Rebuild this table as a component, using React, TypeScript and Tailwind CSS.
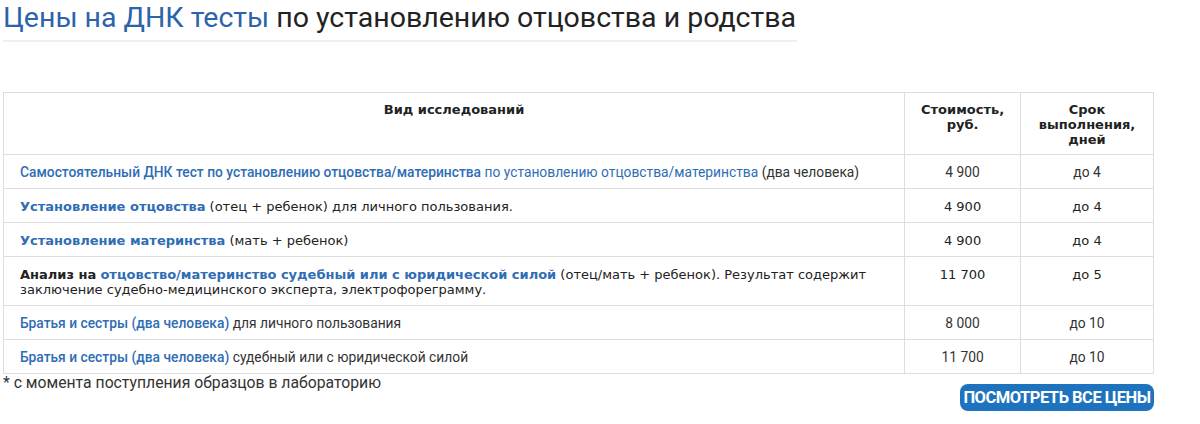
import React from "react";

const roboto = { fontFamily: "Roboto, 'Liberation Sans', sans-serif" };

export default function App() {
  const linkCls = "text-[#2f6db5]";
  const rCell = "font-['Roboto',sans-serif] text-[13.8px] leading-[16px] text-[#333]";
  const vCell = "font-['Verdana','DejaVu_Sans',sans-serif] text-[13px] leading-[15px] text-[#222]";
  const td = "border border-[#dddddd] align-top";
  return (
    <div className="w-[1200px] h-[424px] bg-white pl-[3px] overflow-hidden">
      <div className="pt-[1px]">
        <h1 className="inline-block font-['Roboto',sans-serif] text-[28.5px] leading-[34px] font-normal border-b-2 border-[#eeeeee] pb-[5px] pr-[1px]">
          <span className="text-[#2c63ab]">Цены на ДНК тесты</span>{" "}
          <span className="text-[#222]">по установлению отцовства и родства</span>
        </h1>
      </div>
      <table className="mt-[50px] w-[1151px] border-collapse border border-[#dddddd]">
        <colgroup>
          <col className="w-[902px]" />
          <col className="w-[116px]" />
          <col className="w-[133px]" />
        </colgroup>
        <thead>
          <tr className="font-['Verdana','DejaVu_Sans',sans-serif] text-[13px] leading-[15px] font-bold text-[#222]">
            <th className={`${td} h-[62px] pt-[9px] text-center`}>Вид исследований</th>
            <th className={`${td} pt-[9px] text-center`}>Стоимость,<br />руб.</th>
            <th className={`${td} pt-[9px] text-center`}>Срок<br />выполнения,<br />дней</th>
          </tr>
        </thead>
        <tbody>
          <tr className={rCell}>
            <td className={`${td} h-[34px] pt-[9px] px-[16px]`}>
              <span className={`${linkCls} font-medium`}>Самостоятельный ДНК тест по установлению отцовства/материнства</span>{" "}
              <span className={linkCls}>по установлению отцовства/материнства</span> (два человека)
            </td>
            <td className={`${td} pt-[9px] text-center`}>4 900</td>
            <td className={`${td} pt-[9px] text-center`}>до 4</td>
          </tr>
          <tr className={vCell}>
            <td className={`${td} h-[34px] pt-[10px] px-[16px]`}>
              <span className={`${linkCls} font-bold`}>Установление отцовства</span> (отец + ребенок) для личного пользования.
            </td>
            <td className={`${td} pt-[10px] text-center`}>4 900</td>
            <td className={`${td} pt-[10px] text-center`}>до 4</td>
          </tr>
          <tr className={vCell}>
            <td className={`${td} h-[34px] pt-[10px] px-[16px]`}>
              <span className={`${linkCls} font-bold`}>Установление материнства</span> (мать + ребенок)
            </td>
            <td className={`${td} pt-[10px] text-center`}>4 900</td>
            <td className={`${td} pt-[10px] text-center`}>до 4</td>
          </tr>
          <tr className={vCell}>
            <td className={`${td} h-[49px] pt-[10px] px-[16px]`}>
              <span className="font-bold">Анализ на</span>{" "}
              <span className={`${linkCls} font-bold`}>отцовство/материнство судебный или с юридической силой</span> (отец/мать + ребенок). Результат содержит заключение судебно-медицинского эксперта, электрофореграмму.
            </td>
            <td className={`${td} pt-[10px] text-center`}>11 700</td>
            <td className={`${td} pt-[10px] text-center`}>до 5</td>
          </tr>
          <tr className={rCell}>
            <td className={`${td} h-[34px] pt-[9px] px-[16px]`}>
              <span className={`${linkCls} font-medium`}>Братья и сестры (два человека)</span> для личного пользования
            </td>
            <td className={`${td} pt-[9px] text-center`}>8 000</td>
            <td className={`${td} pt-[9px] text-center`}>до 10</td>
          </tr>
          <tr className={rCell}>
            <td className={`${td} h-[34px] pt-[9px] px-[16px]`}>
              <span className={`${linkCls} font-medium`}>Братья и сестры (два человека)</span> судебный или с юридической силой
            </td>
            <td className={`${td} pt-[9px] text-center`}>11 700</td>
            <td className={`${td} pt-[9px] text-center`}>до 10</td>
          </tr>
        </tbody>
      </table>
      <div className="flex w-[1151px] items-start justify-between">
        <p className="text-[15.75px] leading-[17px] text-[#333]" style={roboto}>
          * с момента поступления образцов в лабораторию
        </p>
        <button className="mt-[10px] h-[27px] w-[194px] rounded-[8px] bg-[#1e73be] font-['Roboto',sans-serif] text-[16.5px] font-bold tracking-[-0.5px] text-white leading-[27px]">
          ПОСМОТРЕТЬ ВСЕ ЦЕНЫ
        </button>
      </div>
    </div>
  );
}
